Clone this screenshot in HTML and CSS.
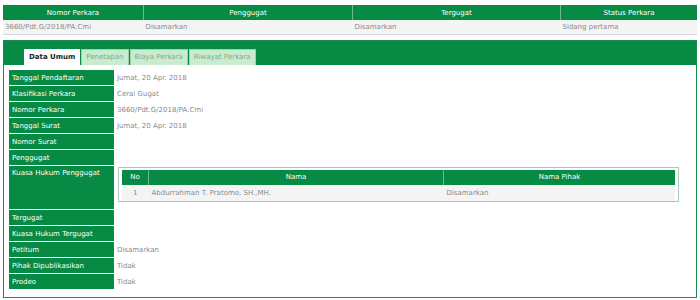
FILE: index.html
```html
<!DOCTYPE html>
<html lang="id">
<head>
  <meta charset="UTF-8">
  <title>Detail Perkara</title>
  <link rel="stylesheet" href="styles.css">
</head>
<body>
  <div class="page">
    <table class="summary">
      <tr>
        <th class="c1">Nomor Perkara</th>
        <th class="c2">Penggugat</th>
        <th class="c3">Tergugat</th>
        <th>Status Perkara</th>
      </tr>
      <tr>
        <td>3660/Pdt.G/2018/PA.Cmi</td>
        <td>Disamarkan</td>
        <td>Disamarkan</td>
        <td>Sidang pertama</td>
      </tr>
    </table>

    <div class="panel">
      <div class="tabs">
        <span class="tab active">Data Umum</span>
        <span class="tab">Penetapan</span>
        <span class="tab">Biaya Perkara</span>
        <span class="tab">Riwayat Perkara</span>
      </div>
      <div class="panel-body">
        <table class="detail">
          <tr><th class="label">Tanggal Pendaftaran</th><td class="value">Jumat, 20 Apr. 2018</td></tr>
          <tr><th class="label">Klasifikasi Perkara</th><td class="value">Cerai Gugat</td></tr>
          <tr><th class="label">Nomor Perkara</th><td class="value">3660/Pdt.G/2018/PA.Cmi</td></tr>
          <tr><th class="label">Tanggal Surat</th><td class="value">Jumat, 20 Apr. 2018</td></tr>
          <tr><th class="label">Nomor Surat</th><td class="value"></td></tr>
          <tr><th class="label">Penggugat</th><td class="value"></td></tr>
          <tr>
            <th class="label tall">Kuasa Hukum Penggugat</th>
            <td class="value top">
              <div class="inner-box">
                <table class="inner">
                  <tr>
                    <th class="no">No</th>
                    <th class="nama">Nama</th>
                    <th>Nama Pihak</th>
                  </tr>
                  <tr>
                    <td class="no">1</td>
                    <td>Abdurrahman T. Pratomo, SH.,MH.</td>
                    <td>Disamarkan</td>
                  </tr>
                </table>
              </div>
            </td>
          </tr>
          <tr><th class="label">Tergugat</th><td class="value"></td></tr>
          <tr><th class="label">Kuasa Hukum Tergugat</th><td class="value"></td></tr>
          <tr><th class="label">Petitum</th><td class="value">Disamarkan</td></tr>
          <tr><th class="label">Pihak Dipublikasikan</th><td class="value">Tidak</td></tr>
          <tr><th class="label">Prodeo</th><td class="value">Tidak</td></tr>
        </table>
      </div>
    </div>
  </div>
</body>
</html>
```

FILE: styles.css
```css
body {
  margin: 0;
  background: #fff;
  font-family: "DejaVu Sans", Verdana, sans-serif;
  font-size: 7px;
  color: #8a8a8a;
}
.page {
  padding: 2px 3px 0 3px;
}
table {
  border-collapse: collapse;
  border-spacing: 0;
}
.summary {
  width: 100%;
  border-top: 2px solid #10894a;
  border-bottom: 1px solid #d6d6d6;
}
.summary tr:first-child {
  border-top: 3px solid #fff;
}
.summary th {
  background: #078a44;
  color: #fff;
  font-weight: normal;
  height: 15px;
  padding: 0;
  border-right: 1px solid #6fb88e;
}
.summary th:last-child {
  border-right: none;
}
.summary .c1 { width: 140px; }
.summary .c2 { width: 208px; }
.summary .c3 { width: 207px; }
.summary td {
  background: #f4f4f4;
  height: 14px;
  padding: 0 2px;
}
.panel {
  margin-top: 5px;
  border: 1px solid #1c8a52;
}
.tabs {
  background: #078a44;
  height: 16px;
  padding: 8px 0 0 20px;
  display: flex;
  gap: 1px;
}
.tab {
  background: #c9ebcf;
  color: #82a98c;
  padding: 0 4px;
  line-height: 15px;
  border: 1px solid #9fd2ab;
  border-bottom: none;
}
.tab.active {
  background: #fff;
  color: #222;
  font-weight: bold;
  padding: 0 4px;
  border-color: #fff;
}
.panel-body {
  padding: 5px 5px 7px 5px;
}
.detail {
  width: 100%;
}
.label {
  width: 99px;
  background: #078a44;
  color: #fff;
  font-weight: normal;
  text-align: left;
  height: 15px;
  padding: 0 3px;
  border-bottom: 1px solid #fff;
}
.label.tall {
  height: 40px;
  vertical-align: top;
  padding-top: 3px;
}
.value {
  padding: 0 3px;
}
.value.top {
  vertical-align: top;
  padding-top: 1px;
}
.inner-box {
  border: 1px solid #a9c9bd;
  padding: 2px 3px 0 3px;
  margin: 0 9px 0 1px;
}
.inner {
  width: 100%;
}
.inner th {
  background: #078a44;
  color: #fff;
  font-weight: normal;
  height: 15px;
  padding: 0;
  border-right: 1px solid #6fb88e;
}
.inner th:last-child {
  border-right: none;
}
.inner .no {
  width: 26px;
  text-align: center;
}
.inner .nama {
  width: 294px;
}
.inner td {
  background: #f4f4f4;
  height: 16px;
  padding: 0 3px;
}
.inner td.no {
  padding: 0;
}
```
